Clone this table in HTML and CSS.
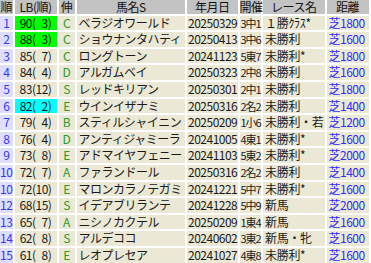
FILE: index.html
```html
<!DOCTYPE html>
<html lang="ja">
<head>
<meta charset="utf-8">
<link rel="stylesheet" href="styles.css">
</head>
<body>
<table class="tbl">
<colgroup>
<col class="c-rank"><col class="c-lb"><col class="c-nobi"><col class="c-name"><col class="c-date"><col class="c-kai"><col class="c-race"><col class="c-dist">
</colgroup>
<thead>
<tr><th>順</th><th>LB(順)</th><th>伸</th><th>馬名S</th><th>年月日</th><th>開催</th><th>レース名</th><th>距離</th></tr>
</thead>
<tbody>
<tr><td class="rank">1</td><td class="lb hi-g">90( 3)</td><td class="nobi">C</td><td class="name">ベラジオワールド</td><td class="num">20250329</td><td class="kai">3中1</td><td class="race">１勝ｸﾗｽ*</td><td class="dist">芝1800</td></tr>
<tr><td class="rank">2</td><td class="lb hi-g">88( 3)</td><td class="nobi">C</td><td class="name">ショウナンタハティ</td><td class="num">20250413</td><td class="kai">3中6</td><td class="race">未勝利</td><td class="dist">芝1600</td></tr>
<tr><td class="rank">3</td><td class="lb">85( 7)</td><td class="nobi">C</td><td class="name">ロングトーン</td><td class="num">20241123</td><td class="kai">5東7</td><td class="race">未勝利*</td><td class="dist">芝1800</td></tr>
<tr><td class="rank">4</td><td class="lb">84( 4)</td><td class="nobi">D</td><td class="name">アルガムベイ</td><td class="num">20250323</td><td class="kai">2中8</td><td class="race">未勝利</td><td class="dist">芝1600</td></tr>
<tr><td class="rank">5</td><td class="lb">83(12)</td><td class="nobi">S</td><td class="name">レッドキリアン</td><td class="num">20250301</td><td class="kai">2中1</td><td class="race">未勝利</td><td class="dist">芝1800</td></tr>
<tr><td class="rank">6</td><td class="lb hi-c">82( 2)</td><td class="nobi">E</td><td class="name">ウインイザナミ</td><td class="num">20250316</td><td class="kai">2名2</td><td class="race">未勝利</td><td class="dist">芝1400</td></tr>
<tr><td class="rank">7</td><td class="lb">79( 4)</td><td class="nobi">B</td><td class="name">スティルシャイニン</td><td class="num">20250209</td><td class="kai">1小6</td><td class="race">未勝利・若</td><td class="dist">芝1200</td></tr>
<tr><td class="rank">8</td><td class="lb">76( 4)</td><td class="nobi">D</td><td class="name">アンティジャミーラ</td><td class="num">20241005</td><td class="kai">4東1</td><td class="race">未勝利*</td><td class="dist">芝1600</td></tr>
<tr><td class="rank">9</td><td class="lb">73( 8)</td><td class="nobi">E</td><td class="name">アドマイヤフェニー</td><td class="num">20241103</td><td class="kai">5東2</td><td class="race">未勝利*</td><td class="dist">芝2000</td></tr>
<tr><td class="rank">10</td><td class="lb">72( 7)</td><td class="nobi">A</td><td class="name">ファランドール</td><td class="num">20250316</td><td class="kai">2名2</td><td class="race">未勝利</td><td class="dist">芝1400</td></tr>
<tr><td class="rank">10</td><td class="lb">72(10)</td><td class="nobi">E</td><td class="name">マロンカラノテガミ</td><td class="num">20241221</td><td class="kai">5中7</td><td class="race">未勝利*</td><td class="dist">芝1600</td></tr>
<tr><td class="rank">12</td><td class="lb">68(15)</td><td class="nobi">S</td><td class="name">イデアブリランテ</td><td class="num">20241228</td><td class="kai">5中9</td><td class="race">新馬</td><td class="dist">芝2000</td></tr>
<tr><td class="rank">13</td><td class="lb">65( 7)</td><td class="nobi">A</td><td class="name">ニシノカクテル</td><td class="num">20250209</td><td class="kai">1東4</td><td class="race">新馬</td><td class="dist">芝1600</td></tr>
<tr><td class="rank">14</td><td class="lb">62( 8)</td><td class="nobi">S</td><td class="name">アルデココ</td><td class="num">20240602</td><td class="kai">3東2</td><td class="race">新馬・牝</td><td class="dist">芝1600</td></tr>
<tr><td class="rank">15</td><td class="lb">61( 8)</td><td class="nobi">E</td><td class="name">レオプレセア</td><td class="num">20241027</td><td class="kai">4東8</td><td class="race">未勝利*</td><td class="dist">芝1600</td></tr>
</tbody>
</table>
</body>
</html>
```
FILE: styles.css
```css
html, body {
  margin: 0;
  padding: 0;
  background: #ffffff;
}
body {
  font-family: "Noto Sans CJK JP", "Noto Sans", sans-serif;
  font-size: 12px;
  color: #1a1a1a;
  overflow: hidden;
}
.tbl {
  border-collapse: separate;
  border-spacing: 2px;
  table-layout: fixed;
  width: 372.5px;
  margin: -2px 0 0 -2px;
  letter-spacing: -0.5px;
}
.c-rank { width: 12.5px; }
.c-lb { width: 42px; }
.c-nobi { width: 16px; }
.c-name { width: 108.5px; }
.c-date { width: 50.5px; }
.c-kai { width: 21.5px; }
.c-race { width: 61.5px; }
.c-dist { width: 42px; }

.tbl th {
  background: #c3c3c3;
  font-weight: normal;
  color: #111111;
  height: 13.6px;
  line-height: 13.6px;
  padding: 0;
  text-align: center;
  white-space: nowrap;
}
.tbl td {
  background: #ebe9d5;
  height: 14.6px;
  line-height: 14.6px;
  padding: 0 0 0 2px;
  white-space: nowrap;
}
.tbl td.rank {
  background: #dedeff;
  color: #3535ff;
  text-align: center;
  padding: 0;
}
.tbl td.lb {
  text-align: center;
  padding: 0;
  word-spacing: 3.8px;
}
.tbl td.hi-g { background: #00ff00; }
.tbl td.hi-c { background: #00ffff; }
.tbl td.nobi {
  color: #2a9a2a;
  text-align: center;
  padding: 0;
}
.tbl td.num { padding-left: 1px; }
.tbl td.kai {
  padding-left: 1px;
  font-size: 11px;
  letter-spacing: -1px;
}
.tbl td.race { letter-spacing: -0.3px; }
.tbl td.dist { color: #2d2dff; }
```
